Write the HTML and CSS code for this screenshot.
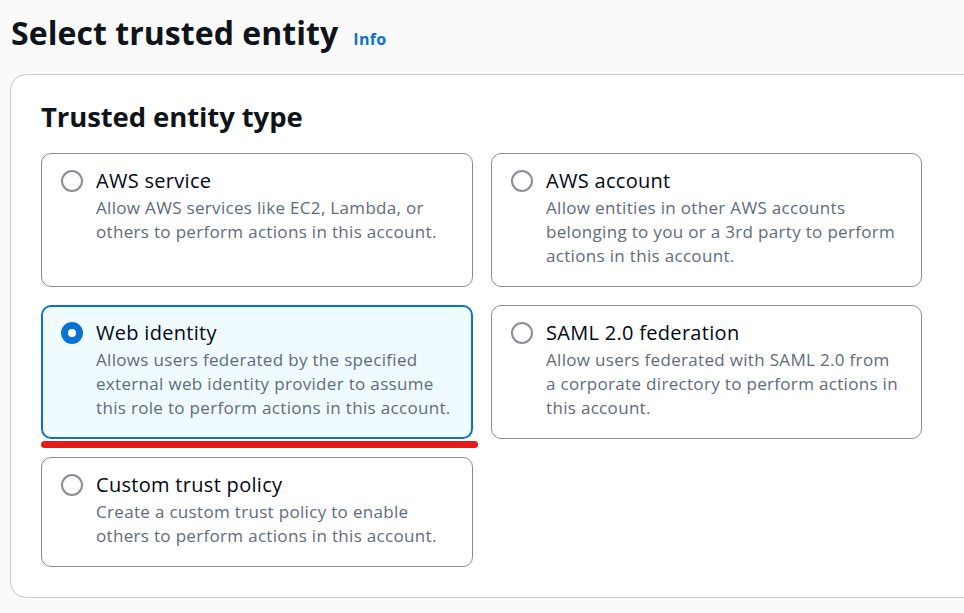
FILE: index.html
```html
<!DOCTYPE html>
<html lang="en">
<head>
<meta charset="utf-8">
<link rel="stylesheet" href="styles.css">
</head>
<body>
<div class="page">
  <header class="page-header">
    <h1 class="page-title">Select trusted entity</h1>
    <a class="info-link" href="#">Info</a>
  </header>
  <section class="panel">
    <h2 class="panel-title">Trusted entity type</h2>
    <div class="tiles">
      <label class="tile">
        <span class="radio"></span>
        <span class="tile-text">
          <span class="tile-label">AWS service</span>
          <span class="tile-desc">Allow AWS services like EC2, Lambda, or others to perform actions in this account.</span>
        </span>
      </label>
      <label class="tile">
        <span class="radio"></span>
        <span class="tile-text">
          <span class="tile-label">AWS account</span>
          <span class="tile-desc">Allow entities in other AWS accounts belonging to you or a 3rd party to perform actions in this account.</span>
        </span>
      </label>
      <label class="tile tile-selected">
        <span class="radio radio-checked"></span>
        <span class="tile-text">
          <span class="tile-label">Web identity</span>
          <span class="tile-desc">Allows users federated by the specified external web identity provider to assume this role to perform actions in this account.</span>
        </span>
        <span class="annotation"></span>
      </label>
      <label class="tile">
        <span class="radio"></span>
        <span class="tile-text">
          <span class="tile-label">SAML 2.0 federation</span>
          <span class="tile-desc">Allow users federated with SAML 2.0 from a corporate directory to perform actions in this account.</span>
        </span>
      </label>
      <label class="tile">
        <span class="radio"></span>
        <span class="tile-text">
          <span class="tile-label">Custom trust policy</span>
          <span class="tile-desc">Create a custom trust policy to enable others to perform actions in this account.</span>
        </span>
      </label>
    </div>
  </section>
</div>
</body>
</html>
```
FILE: styles.css
```css
html, body {
  margin: 0;
  padding: 0;
  background: #fafafa;
  overflow: hidden;
}
body {
  font-family: "Open Sans", "Noto Sans", sans-serif;
  color: #000716;
}
.page {
  width: 1010px;
}
.page-header {
  display: flex;
  align-items: baseline;
  gap: 15px;
  padding: 11px 0 0 11px;
  height: 74px;
  box-sizing: border-box;
}
.page-title {
  margin: 0;
  font-size: 32px;
  line-height: 44px;
  font-weight: 700;
  letter-spacing: 0.05px;
  color: #0f141a;
}
.info-link {
  color: #0972d3;
  font-size: 16px;
  font-weight: 700;
  text-decoration: none;
  letter-spacing: 0.3px;
}
.panel {
  margin-left: 10px;
  background: #ffffff;
  border: 1px solid #c6c6cd;
  border-radius: 16px;
  padding: 24px 30px 30px;
}
.panel-title {
  margin: 0 0 18px;
  font-size: 27.5px;
  line-height: 36px;
  font-weight: 700;
  letter-spacing: -0.1px;
  color: #0f141a;
}
.tiles {
  display: grid;
  grid-template-columns: 432px 431px;
  gap: 18px;
}
.tile {
  position: relative;
  display: flex;
  gap: 13px;
  border: 1px solid #8c8c94;
  border-radius: 10px;
  padding: 13px 20px 18px 19px;
  background: #ffffff;
}
.tile-selected {
  border: 2px solid #0972d3;
  padding: 12px 19px 17px 18px;
  background: #f0fbff;
}
.radio {
  flex: none;
  width: 18px;
  height: 18px;
  margin-top: 3px;
  border: 2px solid #8c8c94;
  border-radius: 50%;
  background: #ffffff;
}
.radio-checked {
  width: 8px;
  height: 8px;
  border: 7px solid #0972d3;
}
.tile-text {
  display: flex;
  flex-direction: column;
}
.tile-label {
  font-size: 20px;
  line-height: 28px;
  letter-spacing: 0.3px;
  color: #000716;
}
.tile-desc {
  margin-top: 1px;
  font-size: 17px;
  line-height: 24px;
  letter-spacing: 0.32px;
  color: #5f6b7a;
}
.annotation {
  position: absolute;
  left: -2px;
  right: -7px;
  bottom: -11px;
  height: 7px;
  border-radius: 4px;
  background: #e31b1b;
}
```
